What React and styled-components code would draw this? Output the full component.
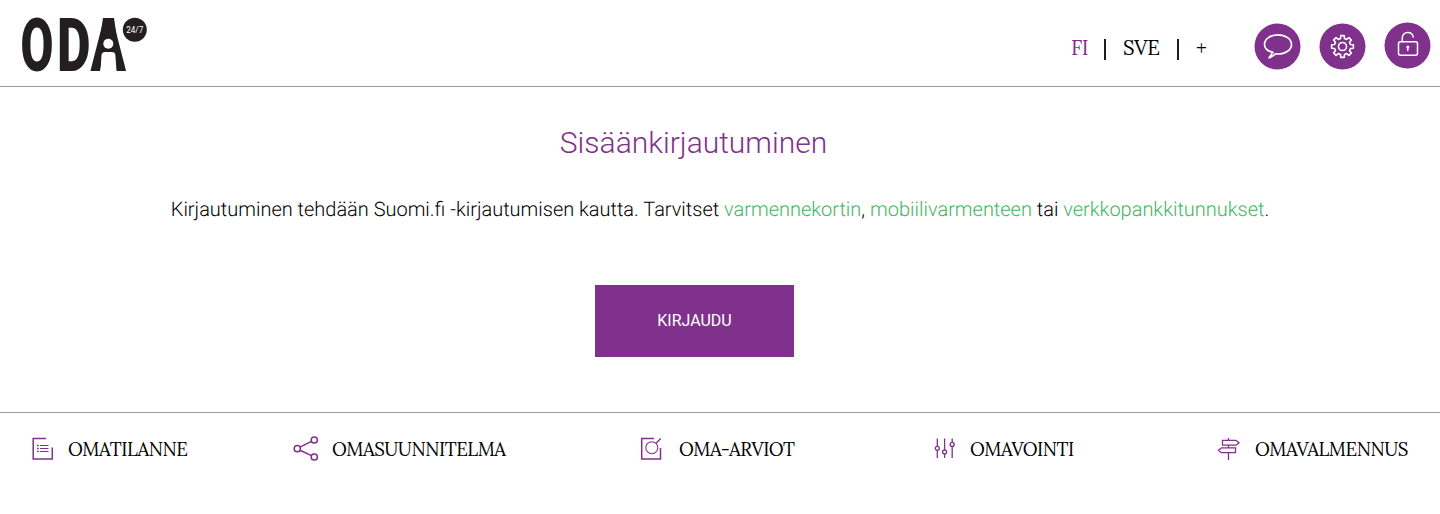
import React from "react";
import styled, { createGlobalStyle } from "styled-components";

const purple = "#80318b";

const GlobalStyle = createGlobalStyle`
  body { margin: 0; background: #fff; color: #000; font-family: Roboto, "Liberation Sans", sans-serif; }
`;

const Page = styled.div`
  display: flex;
  flex-direction: column;
  height: 514px;
  overflow: hidden;
`;

const Header = styled.header`
  box-sizing: border-box;
  display: flex;
  justify-content: space-between;
  align-items: flex-start;
  height: 87px;
  padding: 0 9px 0 20px;
  border-bottom: 1px solid #999;
`;

const HeaderTools = styled.div`
  display: flex;
  align-items: flex-start;
  padding-top: 15px;
`;

const Languages = styled.nav`
  display: flex;
  margin: 21px 46px 0 0;
  font-family: Lora, "Liberation Serif", serif;
  font-size: 20.4px;
  line-height: 24px;
`;

const Language = styled.span`
  box-sizing: border-box;
  width: ${(p) => p.$width}px;
  color: ${(p) => (p.$active ? purple : "#000")};
  letter-spacing: -0.3px;
  white-space: nowrap;
`;

const Separator = styled.i`
  width: 2px;
  height: 21px;
  margin: 3px ${(p) => p.$after}px 0 0;
  background: #1c1c1c;
`;

const RoundButton = styled.button`
  display: flex;
  width: 47px;
  height: 47px;
  margin: ${(p) => p.$top}px 0 0 ${(p) => p.$left || 0}px;
  padding: 0;
  border: 0;
  background: none;
`;

const Main = styled.main`
  display: flex;
  flex-direction: column;
  align-items: center;
  height: 325px;
`;

const Title = styled.h1`
  margin: 38px 53px 0 0;
  color: ${purple};
  font-size: 30px;
  font-weight: 300;
  line-height: 36px;
  white-space: nowrap;
`;

const Intro = styled.p`
  margin: 36px 0 0;
  font-size: 19.98px;
  font-weight: 300;
  line-height: 24px;
  white-space: nowrap;
  text-rendering: geometricPrecision;
`;

const TextLink = styled.a`
  color: #41b75d;
`;

const LoginButton = styled.button`
  width: 199px;
  height: 72px;
  margin: 64px 51px 0 0;
  padding: 0;
  border: 0;
  background: ${purple};
  color: #fff;
  font: 400 16px/72px Roboto, "Liberation Sans", sans-serif;
`;

const Footer = styled.footer`
  display: grid;
  grid-template-columns: 261px 347px 294px 283px 1fr;
  padding: 21px 0 0 32px;
  border-top: 1px solid #999;
`;

const FooterItem = styled.div`
  display: flex;
  align-items: center;
  height: 30px;
  gap: ${(p) => p.$gap}px;
`;

const FooterLabel = styled.span`
  font-family: Lora, "Liberation Serif", serif;
  font-size: 18.7px;
  line-height: 24px;
  letter-spacing: -0.48px;
  white-space: nowrap;
`;

const LineIcon = styled.svg`
  flex: none;
  fill: none;
  stroke: ${(p) => p.$color || purple};
  stroke-width: ${(p) => p.$weight || 1.5};
`;

const Disc = styled.circle.attrs({ cx: 23, cy: 23, r: 23 })`
  fill: ${purple};
  stroke: none;
`;

const Logo = () => (
  <svg width="130" height="86" viewBox="20 0 130 86" overflow="visible">
    <g fill="#231f20" fontFamily="Roboto, sans-serif" fontWeight="900" fontSize="75">
      <text x="20.5" y="71.2" textLength="33" lengthAdjust="spacingAndGlyphs">O</text>
      <text x="57.1" y="71.2" textLength="33.5" lengthAdjust="spacingAndGlyphs">D</text>
      <text x="90.5" y="71.2" textLength="35.5" lengthAdjust="spacingAndGlyphs">A</text>
    </g>
    <path d="M103 18H114L119 52V58H98V52Z" fill="#231f20" />
    <circle cx="108.3" cy="43.7" r="5" fill="#fff" />
    <path d="M100.5 72L101.5 55Q102 52 105 52H112Q115 52 115.4 55L116.5 72Z" fill="#fff" />
    <circle cx="134.8" cy="29.8" r="12" fill="#231f20" />
    <text x="126.2" y="33" fill="#fff" fontFamily="Roboto, sans-serif" fontSize="9" textLength="17" lengthAdjust="spacingAndGlyphs">24/7</text>
  </svg>
);

const gear = (() => {
  const pts = [];
  for (let i = 0; i < 8; i++) {
    const c = (i * Math.PI) / 4;
    [[-0.25, 8.2], [-0.16, 11], [0.16, 11], [0.25, 8.2]].forEach(([a, r]) =>
      pts.push(`${(23 + r * Math.sin(c + a)).toFixed(2)} ${(23 - r * Math.cos(c + a)).toFixed(2)}`)
    );
  }
  return `M${pts.join("L")}Z`;
})();

const DiscIcon = ({ weight, children }) => (
  <LineIcon
    width="47"
    height="47"
    viewBox="-0.5 -0.5 47 47"
    $color="#fff"
    $weight={weight}
    strokeLinecap="round"
    strokeLinejoin="round"
  >
    <Disc />
    {children}
  </LineIcon>
);

const ChatIcon = () => (
  <DiscIcon weight={1.7}>
    <path d="M18.5 28.9C13.5 27.6 10 24.7 10 20.9C10 15.5 16 11.3 23.5 11.3S37 15.5 37 20.9S31 30.5 23.5 30.5L21 30.4C18.8 32.3 17 33.5 14.5 34.3C16.4 32.4 17 30.3 18.5 28.9Z" />
  </DiscIcon>
);

const GearIcon = () => (
  <DiscIcon weight={1.6}>
    <path d={gear} />
    <circle cx="23" cy="23" r="4" />
  </DiscIcon>
);

const LockIcon = () => (
  <DiscIcon weight={1.5}>
    <rect x="14" y="19.2" width="19" height="13.6" rx="2" />
    <path d="M17.8 19V15.5C17.8 12.3 20 10 23.2 10C26 10 28.3 11.8 28.8 14.5" />
    <circle cx="23.3" cy="24.6" r="1.5" fill="#fff" stroke="none" />
    <path d="M23.3 25V28" />
  </DiscIcon>
);

const ListIcon = () => (
  <LineIcon width="22" height="30">
    <path d="M14 4.5H1.2V25H20.3V13.5" />
    <path d="M8 11.5H16.5M8 14.5H16.5M8 17.5H16.5" strokeWidth="1" />
    <path d="M5 11.5H6.7M5 14.5H6.7M5 17.5H6.7" strokeWidth="1.5" />
  </LineIcon>
);

const ShareIcon = () => (
  <LineIcon width="26" height="30">
    <circle cx="4.3" cy="14.7" r="3.1" />
    <circle cx="21.3" cy="6" r="3.1" />
    <circle cx="21.3" cy="23" r="3.1" />
    <path d="M7 13.2L18.5 7.4M7 16.2L18.5 21.6" />
  </LineIcon>
);

const ReviewIcon = () => (
  <LineIcon width="22" height="30">
    <path d="M14 4.5H1.7V25H20.5V14" />
    <circle cx="11.8" cy="13.7" r="6" strokeWidth="1.1" />
    <path d="M15.8 9.5L20.8 4.5" strokeWidth="1.3" />
  </LineIcon>
);

const SlidersIcon = () => (
  <LineIcon width="22" height="30" $weight={1.3}>
    <path d="M3.3 4.5V12.2M3.3 16.4V24M10.6 4.5V16M10.6 20V24M18.2 4.5V8.2M18.2 12.5V24" />
    <circle cx="3.3" cy="14.3" r="2" />
    <circle cx="10.6" cy="18" r="2" />
    <circle cx="18.2" cy="10.4" r="2" />
  </LineIcon>
);

const SignpostIcon = () => (
  <LineIcon width="24" height="30" $weight={1.3}>
    <path d="M5.5 6.3H19L22 8.7L19 11.2H5.5ZM18.5 13.8H4.5L1.5 16.3L4.5 18.7H18.5Z" />
    <path d="M11.5 4V6.3M11.5 11.2V13.8M11.5 18.7V26" />
  </LineIcon>
);

const items = [
  { label: "OMATILANNE", Icon: ListIcon, gap: 14 },
  { label: "OMASUUNNITELMA", Icon: ShareIcon, gap: 13 },
  { label: "OMA-ARVIOT", Icon: ReviewIcon, gap: 17 },
  { label: "OMAVOINTI", Icon: SlidersIcon, gap: 14 },
  { label: "OMAVALMENNUS", Icon: SignpostIcon, gap: 14 },
];

export default function App() {
  return (
    <Page>
      <GlobalStyle />
      <Header>
        <Logo />
        <HeaderTools>
          <Languages>
            <Language $active $width={32.5}>FI</Language>
            <Separator $after={17.5} />
            <Language $width={54}>SVE</Language>
            <Separator $after={17} />
            <Language $width={12}>+</Language>
          </Languages>
          <RoundButton $top={8} aria-label="Viestit"><ChatIcon /></RoundButton>
          <RoundButton $top={8} $left={18} aria-label="Asetukset"><GearIcon /></RoundButton>
          <RoundButton $top={7} $left={18} aria-label="Kirjaudu"><LockIcon /></RoundButton>
        </HeaderTools>
      </Header>
      <Main>
        <Title>Sisäänkirjautuminen</Title>
        <Intro>
          Kirjautuminen tehdään Suomi.fi -kirjautumisen kautta. Tarvitset <TextLink>varmennekortin</TextLink>,{" "}
          <TextLink>mobiilivarmenteen</TextLink> tai <TextLink>verkkopankkitunnukset</TextLink>.
        </Intro>
        <LoginButton>KIRJAUDU</LoginButton>
      </Main>
      <Footer>
        {items.map(({ label, Icon, gap }) => (
          <FooterItem key={label} $gap={gap}>
            <Icon />
            <FooterLabel>{label}</FooterLabel>
          </FooterItem>
        ))}
      </Footer>
    </Page>
  );
}
